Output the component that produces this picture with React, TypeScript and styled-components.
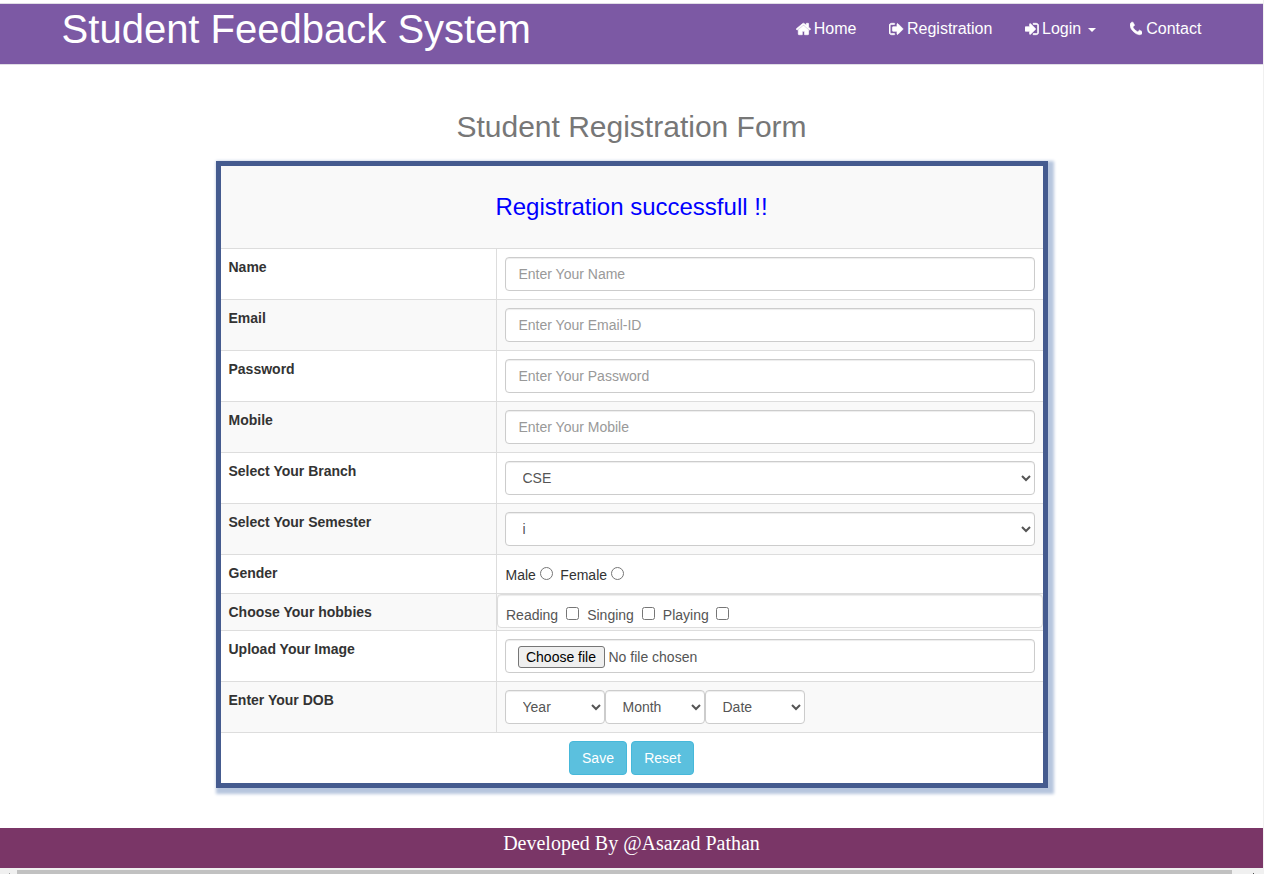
import React from "react";
import styled, { createGlobalStyle } from "styled-components";

const GlobalStyle = createGlobalStyle`
  *, *::before, *::after { box-sizing: border-box; }
  html, body { margin: 0; padding: 0; overflow: hidden; }
  body {
    background: #fff;
    color: #333;
    font-family: "Liberation Sans", Arial, sans-serif;
    font-size: 14px;
    line-height: 20px;
  }
`;

const Window = styled.div`
  display: flex;
  flex-direction: column;
  width: 1264px;
  height: 874px;
  overflow: hidden;
`;

const Viewport = styled.div`
  display: flex;
  flex-direction: column;
  height: 868px;
  padding-top: 3px;
  border-right: 1px solid #f0f0f0;
`;

const Navbar = styled.header`
  display: flex;
  justify-content: space-between;
  align-items: flex-start;
  height: 62px;
  flex: none;
  padding: 0 61.6px 0 61.6px;
  background: #7c59a4;
  border-top: 1px solid #e0dde5;
  border-bottom: 1px solid #e0dde5;
`;

const Brand = styled.h1`
  margin: 2px 0 0;
  font-size: 40px;
  font-weight: 400;
  line-height: 46px;
  color: #fff;
  white-space: nowrap;
`;

const Nav = styled.nav`
  display: flex;
  gap: 32.5px;
  padding-top: 15px;
`;

const NavLink = styled.a`
  display: flex;
  align-items: center;
  height: 20px;
  font-size: 16px;
  line-height: 20px;
  color: #fff;
  white-space: nowrap;
`;

const Glyph = styled.svg<{ $gap: number }>`
  height: 16px;
  margin: -1px ${(p) => p.$gap}px 0 0;
  fill: currentColor;
  stroke: currentColor;
  stroke-width: 75;
  flex: none;
`;

const Caret = styled.span`
  margin: 1px 1px 0 7px;
  border-top: 4px solid #fff;
  border-left: 4px solid transparent;
  border-right: 4px solid transparent;
`;

const Main = styled.main`
  display: flex;
  flex-direction: column;
  align-items: center;
  flex: 1;
`;

const Heading = styled.h2`
  margin: 45px 0 18px;
  font-size: 30px;
  font-weight: 400;
  line-height: 33px;
  color: #777;
`;

const FormPanel = styled.form`
  width: 832px;
  border: 5px solid #455b8f;
  box-shadow: 3px 3px 3px 3px #b7c6de;
  background: #fff;
`;

const Message = styled.div`
  display: flex;
  align-items: center;
  justify-content: center;
  height: 83px;
  border-bottom: 1px solid #ddd;
  background: #f9f9f9;
  font-size: 24px;
  line-height: 26px;
  color: #00f;
`;

const Row = styled.div<{ $striped?: boolean; $height?: number }>`
  display: flex;
  height: ${(p) => p.$height ?? 51}px;
  border-bottom: 1px solid #ddd;
  background: ${(p) => (p.$striped ? "#f9f9f9" : "#fff")};
`;

const LabelCell = styled.div`
  width: 276px;
  padding: 8px;
  border-right: 1px solid #ddd;
  font-weight: 700;
`;

const FieldCell = styled.div<{ $flush?: boolean }>`
  display: flex;
  flex: 1;
  align-items: flex-start;
  padding: ${(p) => (p.$flush ? "0" : "8px")};
`;

const TextInput = styled.input`
  width: 100%;
  height: 34px;
  padding: 6px 13px;
  border: 1px solid #ccc;
  border-radius: 4px;
  background: #fff;
  box-shadow: inset 0 1px 1px rgba(0, 0, 0, 0.075);
  font: 14px/20px "Liberation Sans", Arial, sans-serif;
  color: #555;
  outline: none;
  &::placeholder { color: #999; opacity: 1; }
`;

const Select = styled.select<{ $width?: string }>`
  width: ${(p) => p.$width ?? "100%"};
  height: 34px;
  padding: 6px 13px;
  border: 1px solid #ccc;
  border-radius: 4px;
  background: #fff;
  box-shadow: inset 0 1px 1px rgba(0, 0, 0, 0.075);
  font: 14px/20px "Liberation Sans", Arial, sans-serif;
  color: #555;
`;

const Choices = styled.div`
  display: flex;
  padding: 2px 0 0 1px;
`;

const HobbyBox = styled.div`
  display: flex;
  width: 546px;
  height: 34px;
  padding: 10px 9px 0 8.5px;
  border: 1px solid #ddd;
  border-radius: 4px;
  background: #fff;
  box-shadow: inset 0 1px 1px rgba(0, 0, 0, 0.075);
  color: #555;
`;

const Choice = styled.label<{ $gap: number; $after: number }>`
  display: flex;
  align-items: flex-start;
  gap: ${(p) => p.$gap}px;
  margin-right: ${(p) => p.$after}px;
`;

const Tick = styled.input`
  width: 13px;
  height: 13px;
  margin: 2px 0 0;
`;

const FileBox = styled.div`
  display: flex;
  align-items: center;
  gap: 4px;
  width: 100%;
  height: 34px;
  padding: 2px 12px 0;
  border: 1px solid #ccc;
  border-radius: 4px;
  background: #fff;
  box-shadow: inset 0 1px 1px rgba(0, 0, 0, 0.075);
  color: #555;
`;

const FileButton = styled.button`
  width: 87px;
  height: 22px;
  padding: 0;
  border: 1px solid #767676;
  border-radius: 3px;
  background: #efefef;
  color: #000;
  font: 14px/20px "Liberation Sans", Arial, sans-serif;
  white-space: nowrap;
`;

const Actions = styled.div`
  display: flex;
  justify-content: center;
  gap: 4px;
  height: 50px;
  padding-top: 8px;
`;

const ActionButton = styled.button<{ $width: number }>`
  width: ${(p) => p.$width}px;
  height: 34px;
  padding: 0;
  border: 1px solid #46b8da;
  border-radius: 4px;
  background: #5bc0de;
  color: #fff;
  font: 14px/20px "Liberation Sans", Arial, sans-serif;
`;

const Footer = styled.footer`
  height: 40px;
  flex: none;
  padding-top: 4px;
  background: #7a3667;
  color: #fff;
  text-align: center;
  font: 20px/22px "Liberation Serif", "Times New Roman", serif;
`;

const ScrollTrack = styled.div`
  display: flex;
  align-items: flex-end;
  height: 6px;
  flex: none;
  padding: 0 10px 0 9px;
  background: #f0f0f0;
`;

const ScrollThumb = styled.div`
  flex: 1;
  height: 4px;
  margin: 0 21px 0 7px;
  background: #c1c1c1;
`;

const ScrollArrowTip = styled.span<{ $color: string }>`
  width: 1px;
  height: 1px;
  background: ${(p) => p.$color};
`;

const icons = {
  home: {
    x: 64, w: 1664,
    d: "M1472 992v480q0 26-19 45t-45 19h-384v-384h-256v384h-384q-26 0-45-19t-19-45v-480q0-1 .5-3t.5-3l575-474 575 474q1 2 1 6zm223-69l-62 74q-8 9-21 11h-3q-13 0-21-7l-692-577-692 577q-12 8-24 7-13-2-21-11l-62-74q-8-10-7-23.5t11-21.5l719-599q32-26 76-26t76 26l244 204v-195q0-14 9-23t23-9h192q14 0 23 9t9 23v408l219 182q10 8 11 21.5t-7 23.5z",
  },
  signOut: {
    x: 64, w: 1664,
    d: "M704 1440q0 4 1 20t.5 26.5-3 23.5-10 19.5-20.5 6.5h-320q-119 0-203.5-84.5t-84.5-203.5v-704q0-119 84.5-203.5t203.5-84.5h320q13 0 22.5 9.5t9.5 22.5q0 4 1 20t.5 26.5-3 23.5-10 19.5-20.5 6.5h-320q-66 0-113 47t-47 113v704q0 66 47 113t113 47h312l11.5 1 11.5 3 8 5.5 7 9 2 13.5zm928-544q0 26-19 45l-544 544q-19 19-45 19t-45-19-19-45v-288h-448q-26 0-45-19t-19-45v-384q0-26 19-45t45-19h448v-288q0-26 19-45t45-19 45 19l544 544q19 19 19 45z",
  },
  signIn: {
    x: 128, w: 1536,
    d: "M1312 896q0 26-19 45l-544 544q-19 19-45 19t-45-19-19-45v-288h-448q-26 0-45-19t-19-45v-384q0-26 19-45t45-19h448v-288q0-26 19-45t45-19 45 19l544 544q19 19 19 45zm352-352v704q0 119-84.5 203.5t-203.5 84.5h-320q-13 0-22.5-9.5t-9.5-22.5q0-4-1-20t-.5-26.5 3-23.5 10-19.5 20.5-6.5h320q66 0 113-47t47-113v-704q0-66-47-113t-113-47h-312l-11.5-1-11.5-3-8-5.5-7-9-2-13.5q0-4-1-20t-.5-26.5 3-23.5 10-19.5 20.5-6.5h320q119 0 203.5 84.5t84.5 203.5z",
  },
  phone: {
    x: 192, w: 1408,
    d: "M1600 1240q0 27-10 70.5t-21 68.5q-21 50-122 106-94 51-186 51-27 0-53-3.5t-57.5-12.5-47-14.5-55.5-20.5-49-18q-98-35-175-83-127-79-264-216t-216-264q-48-77-83-175-3-9-18-49t-20.5-55.5-14.5-47-12.5-57.5-3.5-53q0-92 51-186 56-101 106-122 25-11 68.5-21t70.5-10q14 0 21 3 18 6 53 76 11 19 30 54t35 63.5 31 53.5q3 4 17.5 25t21.5 35.5 7 28.5q0 20-28.5 50t-62 55-62 53-28.5 46q0 9 5 22.5t8.5 20.5 14 24 11.5 19q76 137 174 235t235 174q2 1 19 11.5t24 14 20.5 8.5 22.5 5q18 0 46-28.5t53-62 55-62 50-28.5q14 0 28.5 7t35.5 21.5 25 17.5q25 15 53.5 31t63.5 35 54 30q70 35 76 53 3 7 3 21z",
  },
};

function Icon({ name, gap }: { name: keyof typeof icons; gap: number }) {
  const { x, w, d } = icons[name];
  return (
    <Glyph $gap={gap} viewBox={`${x} 0 ${w} 1792`} width={(w / 1792) * 16} aria-hidden="true">
      <path d={d} />
    </Glyph>
  );
}

const textFields = [
  { label: "Name", placeholder: "Enter Your Name" },
  { label: "Email", placeholder: "Enter Your Email-ID" },
  { label: "Password", placeholder: "Enter Your Password" },
  { label: "Mobile", placeholder: "Enter Your Mobile" },
];

export default function App() {
  return (
    <Window>
      <GlobalStyle />
      <Viewport>
        <Navbar>
          <Brand>Student Feedback System</Brand>
          <Nav>
            <NavLink><Icon name="home" gap={2.5} />Home</NavLink>
            <NavLink><Icon name="signOut" gap={3.2} />Registration</NavLink>
            <NavLink><Icon name="signIn" gap={3.5} />Login<Caret /></NavLink>
            <NavLink><Icon name="phone" gap={4} />Contact</NavLink>
          </Nav>
        </Navbar>
        <Main>
          <Heading>Student Registration Form</Heading>
          <FormPanel>
            <Message>Registration successfull !!</Message>
            {textFields.map((field, i) => (
              <Row key={field.label} $striped={i % 2 === 1}>
                <LabelCell>{field.label}</LabelCell>
                <FieldCell><TextInput placeholder={field.placeholder} /></FieldCell>
              </Row>
            ))}
            <Row>
              <LabelCell>Select Your Branch</LabelCell>
              <FieldCell><Select><option>CSE</option></Select></FieldCell>
            </Row>
            <Row $striped>
              <LabelCell>Select Your Semester</LabelCell>
              <FieldCell><Select><option>i</option></Select></FieldCell>
            </Row>
            <Row $height={39}>
              <LabelCell>Gender</LabelCell>
              <FieldCell>
                <Choices>
                  <Choice $gap={4} $after={7.5}>Male<Tick type="radio" name="gender" /></Choice>
                  <Choice $gap={4} $after={0}>Female<Tick type="radio" name="gender" /></Choice>
                </Choices>
              </FieldCell>
            </Row>
            <Row $striped $height={37}>
              <LabelCell>Choose Your hobbies</LabelCell>
              <FieldCell $flush>
                <HobbyBox>
                  <Choice $gap={8} $after={8}>Reading<Tick type="checkbox" /></Choice>
                  <Choice $gap={8} $after={8}>Singing<Tick type="checkbox" /></Choice>
                  <Choice $gap={7.5} $after={0}>Playing<Tick type="checkbox" /></Choice>
                </HobbyBox>
              </FieldCell>
            </Row>
            <Row>
              <LabelCell>Upload Your Image</LabelCell>
              <FieldCell>
                <FileBox><FileButton type="button">Choose file</FileButton>No file chosen</FileBox>
              </FieldCell>
            </Row>
            <Row $striped>
              <LabelCell>Enter Your DOB</LabelCell>
              <FieldCell>
                <Select $width="100px"><option>Year</option></Select>
                <Select $width="100px"><option>Month</option></Select>
                <Select $width="100px"><option>Date</option></Select>
              </FieldCell>
            </Row>
            <Actions>
              <ActionButton type="button" $width={58}>Save</ActionButton>
              <ActionButton type="button" $width={63}>Reset</ActionButton>
            </Actions>
          </FormPanel>
        </Main>
        <Footer>Developed By @Asazad Pathan</Footer>
      </Viewport>
      <ScrollTrack>
        <ScrollArrowTip $color="#a3a3a3" />
        <ScrollThumb />
        <ScrollArrowTip $color="#505050" />
      </ScrollTrack>
    </Window>
  );
}
